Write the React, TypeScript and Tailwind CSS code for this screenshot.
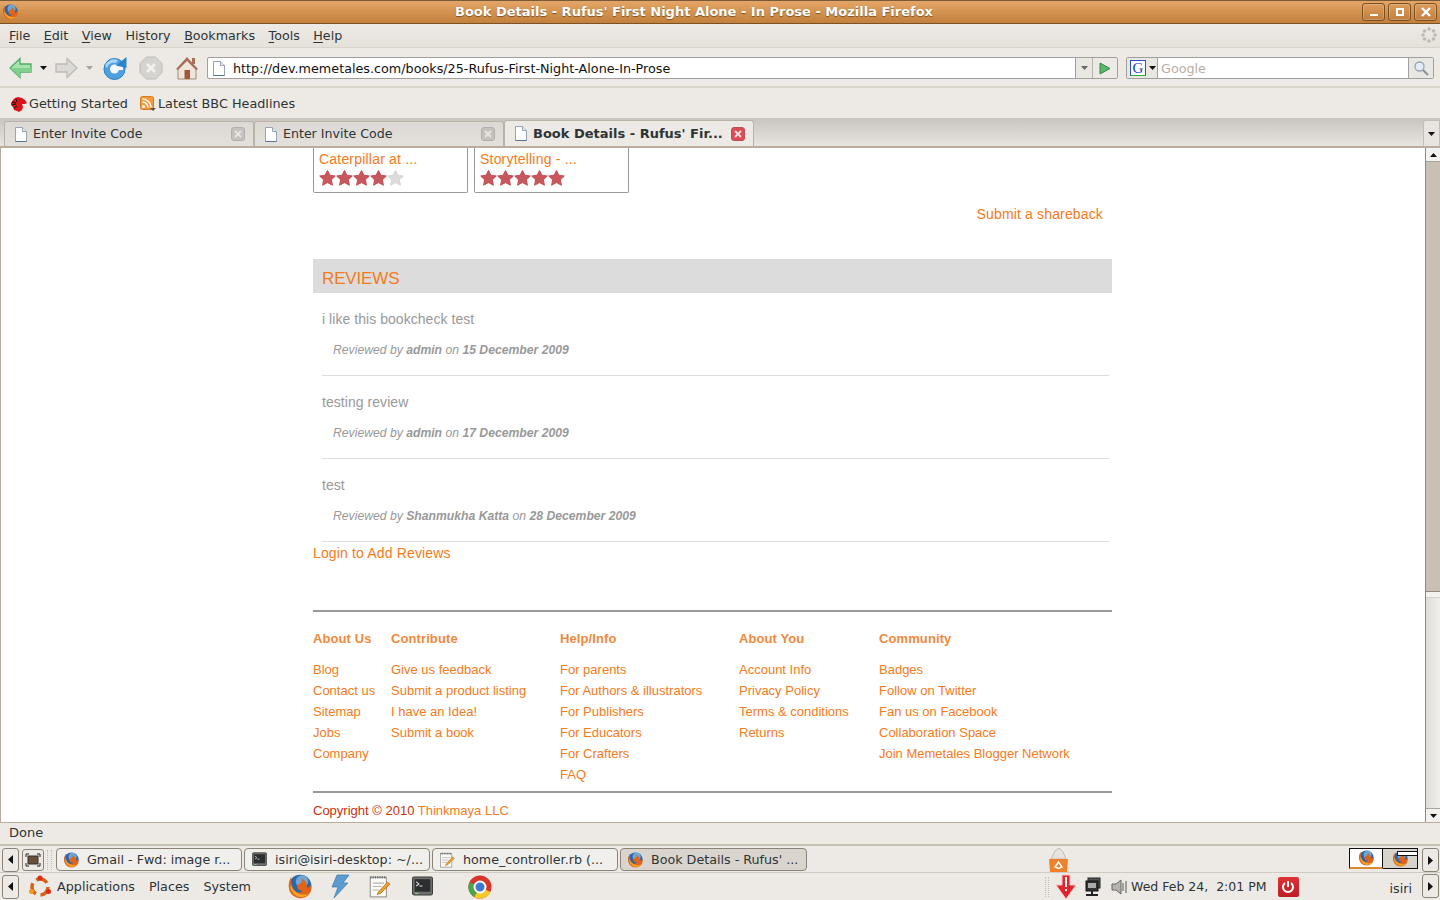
import React from "react";

const sys = "font-['DejaVu_Sans',sans-serif]";
const web = "font-['Liberation_Sans',Arial,sans-serif]";

const Firefox = ({ size = 18 }: { size?: number }) => (
  <svg width={size} height={size} viewBox="0 0 20 20" className="shrink-0">
    <circle cx="10.500" cy="9.500" r="9" fill="#2a66a8" />
    <circle cx="12" cy="6" r="5" fill="#6fa6d6" />
    <path d="M3.500 2C.5 7 .8 13 4 16.500c3.500 3.500 9.500 3.800 13 .5 2.300-2.300 3-5.500 2.300-8.500-.6 1.500-1.800 2.300-3.300 2.300.4-3-1.300-6-4.500-7 1 1.700.4 3.200-1 3.700-1.700.6-2.600 1.900-2.100 3.700.5 1.700 2.300 2.400 4.100 1.900-1.200 2-4 2.300-6 .8C3.700 11 3 6.500 3.500 2z" fill="#e2641a" />
    <path d="M2.500 10c.5 4 4 8.500 9 8.500 2.500 0 4.500-1 6-3-3 1.500-7 1.300-10-1C5.500 13 4 11.500 3.500 9z" fill="#f4a326" />
  </svg>
);

const PageIcon = () => (
  <svg width="12" height="15" viewBox="0 0 12 15" className="shrink-0">
    <path d="M.5.500h7l4 4v10h-11z" fill="#fff" stroke="#98a4b4" />
    <path d="M7.500.5v4h4" fill="#e3e7ee" stroke="#98a4b4" />
    <path d="M.5 14.500h11" stroke="#55749c" />
  </svg>
);

const Star = ({ on = true }: { on?: boolean }) => (
  <svg width="17" height="16" viewBox="0 0 17 16">
    <path
      d="M8.500.5l2.400 4.700 5.400.8-3.900 3.800 1 5.400-4.900-2.600-4.900 2.600 1-5.400L.7 6l5.400-.8z"
      fill={on ? "#c9565d" : "#dcdcdc"}
      stroke={on ? "#c04f55" : "#d6d6d6"}
    />
  </svg>
);

const Caret = ({ color = "#2e3436" }: { color?: string }) => (
  <svg width="7" height="4" viewBox="0 0 7 4" className="shrink-0">
    <path d="M0 0h7L3.500 4z" fill={color} />
  </svg>
);

const WinButton = ({ children }: { children: React.ReactNode }) => (
  <div className="w-[23px] h-[18px] rounded-[3px] border border-[#7b4f1f] bg-gradient-to-b from-[#dd9d5c] to-[#c17f3d] flex items-center justify-center shadow-[inset_0_0_0_1px_rgba(255,255,255,0.2)]">
    {children}
  </div>
);

const MenuItem = ({ first, rest, pre = "" }: { first: string; rest: string; pre?: string }) => (
  <span>
    {pre}
    <span className="underline underline-offset-2">{first}</span>
    {rest}
  </span>
);

const Tab = ({ title, active }: { title: string; active?: boolean }) => (
  <div
    className={
      "w-[250px] flex items-center pl-[10px] pr-[8px] rounded-t-[3px] border border-b-0 border-[#b9b2a6] " +
      (active
        ? "h-[26px] bg-[#edeae5] font-bold"
        : "h-[25px] bg-gradient-to-b from-[#dcd9d4] to-[#e4e1dc]")
    }
  >
    <PageIcon />
    <span className={"ml-[6px] flex-1 whitespace-nowrap text-[#2e3436] " + (active ? "text-[13px]" : "text-[12.600px]")}>
      {title}
    </span>
    {active ? (
      <div className="w-[14px] h-[14px] rounded-[3px] bg-[#df4b55] border border-[#bb5158] flex items-center justify-center">
        <svg width="8" height="8" viewBox="0 0 8 8">
          <path d="M1 1l6 6M7 1L1 7" stroke="#fbe3e3" strokeWidth="1.800" />
        </svg>
      </div>
    ) : (
      <div className="w-[14px] h-[14px] rounded-[3px] bg-[#c5c2bd] border border-[#b3b0ab] flex items-center justify-center">
        <svg width="8" height="8" viewBox="0 0 8 8">
          <path d="M1 1l6 6M7 1L1 7" stroke="#e8e6e2" strokeWidth="1.800" />
        </svg>
      </div>
    )}
  </div>
);

const Review = ({ text, by, date }: { text: string; by: string; date: string }) => (
  <div className="ml-[9px] mr-[3px] h-[83px] border-b border-[#dcdcdc] flex flex-col">
    <p className="mt-[17px] text-[14px] leading-[18px] text-[#999] tracking-[0.05px]">{text}</p>
    <p className="ml-[11px] mt-[15px] text-[12.200px] leading-[14px] italic text-[#999]">
      Reviewed by <b>{by}</b> on <b>{date}</b>
    </p>
  </div>
);

const FooterCol = ({ title, links, w }: { title: string; links: string[]; w: string }) => (
  <div className={w}>
    <h4 className="text-[13px] leading-[16px] font-bold text-[#ee8a3c] tracking-[0.1px]">{title}</h4>
    <ul className="mt-[12px]">
      {links.map(l => (
        <li key={l} className="h-[21px] text-[13px] leading-[21px] text-[#f47b20] whitespace-nowrap">
          {l}
        </li>
      ))}
    </ul>
  </div>
);

const LeftArrowBtn = () => (
  <div className="w-[17px] h-[24px] shrink-0 rounded-[3px] border border-[#8a8478] bg-[#edeae5] flex items-center justify-center">
    <svg width="5" height="9" viewBox="0 0 5 9">
      <path d="M5 0v9L0 4.500z" fill="#111" />
    </svg>
  </div>
);

const RightArrowBtn = () => (
  <div className="w-[17px] h-[24px] rounded-[3px] border border-[#8a8478] bg-[#edeae5] flex items-center justify-center">
    <svg width="5" height="9" viewBox="0 0 5 9">
      <path d="M0 0v9l5-4.500z" fill="#111" />
    </svg>
  </div>
);

const TaskButton = ({ icon, label, w, active }: { icon: React.ReactNode; label: string; w: string; active?: boolean }) => (
  <div
    className={
      w +
      " h-[23px] rounded-[4px] border border-[#8a8478] flex items-center pl-[4px] shrink-0 " +
      (active ? "bg-[#d9d5ce]" : "bg-[#f1efeb]")
    }
  >
    <span className="w-[20px] flex justify-center">{icon}</span>
    <span className="ml-[6px] text-[12.700px] text-[#2e3436] whitespace-nowrap">{label}</span>
  </div>
);

const Terminal = ({ size = 18 }: { size?: number }) => (
  <svg width={size} height={size} viewBox="0 0 20 20" className="shrink-0">
    <rect x=".5" y="1" width="19" height="17" rx="1.500" fill="#6f716c" stroke="#3b3d3a" />
    <rect x="2.500" y="3" width="15" height="12" fill="#2c2f30" />
    <path d="M4 5.500l2.500 2-2.500 2M7 9.500h3" stroke="#ddd" fill="none" />
    <rect x="3" y="16" width="3" height="1" fill="#8be08b" />
  </svg>
);

const Notepad = ({ size = 18 }: { size?: number }) => (
  <svg width={size} height={size} viewBox="0 0 20 20" className="shrink-0">
    <rect x="2" y="2" width="14" height="17" fill="#fbfbf8" stroke="#9b9b94" />
    <path d="M2 2h14" stroke="#666" strokeWidth="2" strokeDasharray="1 1" />
    <path d="M4 7h10M4 10h8M4 13h6" stroke="#b5b5ae" />
    <path d="M9 15l8-9 2 2-8 8-3 1z" fill="#eda12c" stroke="#a5650f" strokeWidth=".6" />
  </svg>
);

export default function App() {
  return (
    <div className={"w-[1440px] h-[900px] overflow-hidden flex flex-col bg-[#edeae5] " + sys}>
      {/* title bar */}
      <div className="h-[24px] shrink-0 relative flex items-center justify-center pr-[52px] border-t border-[#7a5a36] border-b border-b-[#7b5325] bg-[linear-gradient(#e4a668,#d3924f_50%,#c47f3c)]">
        <span className="absolute left-[2px] top-[3px]">
          <Firefox size={16} />
        </span>
        <span className="text-[13px] font-bold text-[#fff] [text-shadow:0_1px_1px_#7b5325]">
          Book Details - Rufus' First Night Alone - In Prose - Mozilla Firefox
        </span>
        <div className="absolute right-[3px] top-[2px] flex gap-[3px]">
          <WinButton>
            <span className="w-[8px] h-[2px] bg-white mt-[5px]" />
          </WinButton>
          <WinButton>
            <span className="w-[8px] h-[8px] border-2 border-white" />
          </WinButton>
          <WinButton>
            <svg width="10" height="10" viewBox="0 0 10 10">
              <path d="M1 1l8 8M9 1l-8 8" stroke="#fff" strokeWidth="2.400" />
            </svg>
          </WinButton>
        </div>
      </div>

      {/* menu bar */}
      <div className="h-[24px] shrink-0 flex items-center pl-[9px] pt-[1px] gap-[13.500px] text-[12.700px] text-[#2e3436] bg-gradient-to-b from-[#edeae5] to-[#e5e2dc] border-b border-[#d8d4cc] relative">
        <MenuItem first="F" rest="ile" />
        <MenuItem first="E" rest="dit" />
        <MenuItem first="V" rest="iew" />
        <MenuItem pre="Hi" first="s" rest="tory" />
        <MenuItem first="B" rest="ookmarks" />
        <MenuItem first="T" rest="ools" />
        <MenuItem first="H" rest="elp" />
        <svg width="16" height="16" viewBox="0 0 16 16" className="absolute right-[3px] top-[3px]">
          <g fill="#bdbab4">
            <circle cx="8" cy="2" r="1.800" />
            <circle cx="12.500" cy="4" r="1.800" />
            <circle cx="14" cy="8" r="1.800" />
            <circle cx="12.500" cy="12" r="1.800" />
            <circle cx="8" cy="14" r="1.800" />
            <circle cx="3.500" cy="12" r="1.800" />
            <circle cx="2" cy="8" r="1.800" />
            <circle cx="3.500" cy="4" r="1.800" />
          </g>
        </svg>
      </div>

      {/* navigation toolbar */}
      <div className="h-[40px] shrink-0 flex items-center pl-[9px] pt-[2px] border-b-2 border-[#d8d4cc]">
        <svg width="23" height="22" viewBox="0 0 23 22">
          <path d="M11 1.500L1 11l10 9.500V15h11V7H11z" fill="#a6e3ae" stroke="#4eac62" strokeWidth="1.300" />
          <path d="M11 15h11V11H1l10 9.500z" fill="#7fd08e" />
        </svg>
        <span className="ml-[8px] flex">
          <Caret color="#111" />
        </span>
        <svg width="23" height="22" viewBox="0 0 23 22" className="ml-[8px]">
          <path d="M12 1.500L22 11l-10 9.500V15H1V7h11z" fill="#dcdad6" stroke="#bdbab5" strokeWidth="1.300" />
        </svg>
        <span className="ml-[8px] flex">
          <Caret color="#a5a29c" />
        </span>
        <svg width="24" height="24" viewBox="0 0 24 24" className="ml-[10px]">
          <circle cx="11.500" cy="13" r="10.500" fill="#4f9fe2" stroke="#2b7fc4" />
          <path d="M2 10a10 10 0 0 1 13-6l-2 3a7 7 0 0 0-9 5z" fill="#a9d7f7" />
          <circle cx="11.500" cy="13" r="4.500" fill="#f4f8fb" />
          <path d="M11 9.500h9V14h-9z" fill="#f4f8fb" />
          <path d="M13 9.500L23.500 1v11z" fill="#2b83cc" />
        </svg>
        <svg width="24" height="24" viewBox="0 0 24 24" className="ml-[12px]">
          <path d="M7.500 1h9L23 7.500v9L16.500 23h-9L1 16.500v-9z" fill="#d5d3cf" stroke="#bebcb7" />
          <path d="M8 8l8 8M16 8l-8 8" stroke="#f2f1ee" strokeWidth="3" />
        </svg>
        <svg width="24" height="24" viewBox="0 0 24 24" className="ml-[12px]">
          <path d="M3 13L12 3l9 10v10H3z" fill="#eee6da" stroke="#a38a70" />
          <path d="M1 13L12 1l11 12-2 1-9-9-9 9z" fill="#a8705a" />
          <rect x="17" y="2" width="3" height="6" fill="#a8705a" />
          <rect x="9.500" y="14" width="5.500" height="9" fill="#a4553f" />
        </svg>
        {/* url bar */}
        <div className="ml-[8px] w-[911px] h-[22px] flex bg-white border border-[#a0a0a0] rounded-[2px]">
          <div className="flex-1 flex items-center pl-[5px]">
            <PageIcon />
            <span className="ml-[8px] pt-[1px] text-[12.750px] text-[#111]">
              http://dev.memetales.com/books/25-Rufus-First-Night-Alone-In-Prose
            </span>
          </div>
          <div className="w-[17px] bg-[#e9e7e2] border-l border-[#a0a0a0] flex items-center justify-center">
            <Caret color="#666" />
          </div>
          <div className="w-[25px] bg-[#edeae5] border-l border-[#b5b3ae] flex items-center justify-center rounded-r-[2px]">
            <svg width="12" height="13" viewBox="0 0 12 13">
              <path d="M1 1l10 5.500L1 12z" fill="#5cb56a" stroke="#2c8a45" />
            </svg>
          </div>
        </div>
        {/* search bar */}
        <div className="ml-[8px] w-[308px] h-[22px] flex bg-white border border-[#a0a0a0] rounded-[2px]">
          <div className="w-[31px] bg-[#e9e7e2] border-r border-[#a0a0a0] flex items-center pl-[3px] gap-[3px]">
            <span className="w-[16px] h-[16px] bg-white border border-[#2d53c8] border-r-[#c23] border-b-[#3a3] flex items-center justify-center text-[15px] leading-none text-[#1c3fc0] font-['Liberation_Serif',serif]">
              G
            </span>
            <Caret color="#111" />
          </div>
          <span className="flex-1 pl-[3px] text-[12.750px] leading-[22px] text-[#b8ada3]">Google</span>
          <div className="w-[25px] bg-[#e9e7e2] border-l border-[#a0a0a0] flex items-center justify-center">
            <svg width="16" height="16" viewBox="0 0 16 16">
              <circle cx="6.500" cy="6.500" r="4.500" fill="#e4edf6" stroke="#9aa3ac" strokeWidth="1.300" />
              <path d="M10 10l5 5" stroke="#8f9499" strokeWidth="2.200" />
            </svg>
          </div>
        </div>
      </div>

      {/* bookmarks */}
      <div className="h-[30px] shrink-0 flex items-center pl-[11px] pt-[2px] text-[12.800px] text-[#2e3436]">
        <svg width="16" height="15" viewBox="0 0 16 15" className="shrink-0">
          <path d="M0 6l2-3 2-2 3-1 4 1 3 2 2 3-2 1-3 0 1 3-1 3-3 2-2-1-3-1-1-3-2-2z" fill="#d8141c" />
          <path d="M1 5l4 1M1 8l4-1M3 11l3-2M5 2l1 3" stroke="#111" />
        </svg>
        <span className="ml-[2px]">Getting Started</span>
        <svg width="16" height="16" viewBox="0 0 16 16" className="ml-[12px] shrink-0">
          <rect x=".5" y=".5" width="13" height="13" rx="2" fill="#f59a3a" stroke="#d67a20" />
          <circle cx="3.500" cy="10.500" r="1.500" fill="#fff" />
          <path d="M2.500 6a5.500 5.500 0 0 1 5.500 5.500M2.500 3a8.500 8.500 0 0 1 8.500 8.500" stroke="#fff" strokeWidth="1.500" fill="none" />
          <path d="M10 12h6l-3 3z" fill="#555" />
        </svg>
        <span className="ml-[2px]">Latest BBC Headlines</span>
      </div>

      {/* tab strip */}
      <div className="h-[30px] shrink-0 flex items-end pl-[4px] bg-gradient-to-b from-[#c8c5c0] to-[#e8e5e0] border-b-2 border-[#b8ad9e] relative">
        <Tab title="Enter Invite Code" />
        <Tab title="Enter Invite Code" />
        <Tab title="Book Details - Rufus' Fir..." active />
        <div className="absolute right-0 bottom-0 w-[17px] h-[26px] bg-[#e8e5e0] border border-b-0 border-[#c2bfb9] rounded-tl-[3px] flex items-center justify-center">
          <Caret color="#111" />
        </div>
      </div>

      {/* page */}
      <div className="h-[674px] shrink-0 flex bg-white border-l border-[#b8ad9e] overflow-hidden">
        <div className={"flex-1 pl-[312px] " + web}>
          <div className="w-[799px]">
            <div className="flex gap-[6px]">
              {[
                { t: "Caterpillar at ...", n: 4 },
                { t: "Storytelling - ...", n: 5 },
              ].map(c => (
                <div key={c.t} className="w-[155px] h-[45px] border border-t-0 border-[#999] rounded-b-[2px] pl-[5px]">
                  <p className="text-[14px] leading-[22px] text-[#f47b20] tracking-[0.2px]">{c.t}</p>
                  <div className="flex">
                    {[1, 2, 3, 4, 5].map(i => (
                      <Star key={i} on={i <= c.n} />
                    ))}
                  </div>
                </div>
              ))}
            </div>
            <p className="mt-[12px] pr-[9px] text-right text-[14px] leading-[18px] text-[#f47b20] tracking-[0.15px]">
              Submit a shareback
            </p>
            <div className="mt-[36px] h-[34px] bg-[#dcdcdc] pl-[9px] text-[17px] tracking-[-0.15px] leading-[40px] text-[#f47b20]">REVIEWS</div>
            <Review text="i like this bookcheck test" by="admin" date="15 December 2009" />
            <Review text="testing review" by="admin" date="17 December 2009" />
            <Review text="test" by="Shanmukha Katta" date="28 December 2009" />
            <p className="mt-[2px] text-[14px] leading-[18px] text-[#f47b20] tracking-[0.15px]">Login to Add Reviews</p>
            <div className="mt-[48px] border-t-2 border-[#999]" />
            <div className="flex mt-[19px] h-[160px]">
              <FooterCol
                w="w-[78px]"
                title="About Us"
                links={["Blog", "Contact us", "Sitemap", "Jobs", "Company"]}
              />
              <FooterCol
                w="w-[169px]"
                title="Contribute"
                links={["Give us feedback", "Submit a product listing", "I have an Idea!", "Submit a book"]}
              />
              <FooterCol
                w="w-[179px]"
                title="Help/Info"
                links={["For parents", "For Authors & illustrators", "For Publishers", "For Educators", "For Crafters", "FAQ"]}
              />
              <FooterCol
                w="w-[140px]"
                title="About You"
                links={["Account Info", "Privacy Policy", "Terms & conditions", "Returns"]}
              />
              <FooterCol
                w="w-[233px]"
                title="Community"
                links={["Badges", "Follow on Twitter", "Fan us on Facebook", "Collaboration Space", "Join Memetales Blogger Network"]}
              />
            </div>
            <div className="border-t-2 border-[#999]" />
            <p className="mt-[9px] text-[13px] leading-[18px] text-[#c8320a]">
              Copyright © 2010 <span className="text-[#f47b20]">Thinkmaya LLC</span>
            </p>
          </div>
        </div>
        {/* scrollbar */}
        <div className="w-[15px] shrink-0 flex flex-col border-l border-[#8f8a80] bg-gradient-to-r from-[#e0dcd6] to-[#f2f0ec]">
          <div className="h-[14px] bg-[#f4f2ee] border-b border-[#a8a59f] flex items-center justify-center">
            <svg width="7" height="4" viewBox="0 0 7 4">
              <path d="M0 4h7L3.500 0z" fill="#111" />
            </svg>
          </div>
          <div className="h-[430px] bg-[#c9c0b4] border-b border-[#8f8a80]" />
          <div className="h-[6px] bg-[#f4f2ee] border-b border-[#d5d2cc]" />
          <div className="flex-1" />
          <div className="h-[14px] bg-[#f4f2ee] border-t border-[#a8a59f] flex items-center justify-center">
            <Caret color="#111" />
          </div>
        </div>
      </div>

      {/* status bar */}
      <div className="h-[24px] shrink-0 flex items-center pl-[9px] pb-[2px] text-[13px] text-[#2e3436] border-t border-[#b8ad9e] border-b-2 border-b-[#c5bfb4]">
        Done
      </div>

      {/* window list panel */}
      <div className="h-[27px] shrink-0 flex items-center pl-[2px] pt-[1px] relative border-b border-[#d0ccc4]">
        <LeftArrowBtn />
        <div className="ml-[3px] w-[22px] h-[22px] shrink-0 rounded-[3px] border border-[#8a8478] flex items-center justify-center">
          <svg width="16" height="14" viewBox="0 0 16 14">
            <rect x="3" y="3" width="10" height="8" fill="#6b4f3a" stroke="#333" />
            <path d="M1 4V1h3M12 1h3v3M1 10v3h3M15 10v3h-3" stroke="#222" fill="none" />
          </svg>
        </div>
        <span className="ml-[3px] mr-[4px] w-[5px] h-[20px] shrink-0 border-x border-dotted border-[#c2bfb9]" />
        <div className="flex gap-[2px]">
          <TaskButton w="w-[186px]" icon={<Firefox size={16} />} label="Gmail - Fwd: image r..." />
          <TaskButton w="w-[186px]" icon={<Terminal size={15} />} label="isiri@isiri-desktop: ~/..." />
          <TaskButton w="w-[186px]" icon={<Notepad size={16} />} label="home_controller.rb (..." />
          <TaskButton w="w-[187px]" icon={<Firefox size={16} />} label="Book Details - Rufus' ..." active />
        </div>
        <svg width="21" height="24" viewBox="0 0 21 24" className="absolute left-[1048px] top-[2px]">
          <path d="M3 11L7 3l4-3 4 4 3 7z" fill="#e6e3dd" stroke="#bbb" />
          <path d="M1 11h19l-1 13H2z" fill="#f0812b" />
          <path d="M7 19l3.500-5 3.500 5-3.500 1.500z" fill="none" stroke="#fff" strokeWidth="1.500" />
        </svg>
        <div className="absolute right-[22px] top-[2px] flex h-[21px]">
          <div className="w-[34px] bg-white border border-[#111] border-b-2 border-b-[#d88a2c] flex items-center justify-center">
            <Firefox size={16} />
          </div>
          <div className="w-[35px] bg-[#d6d3cd] border border-[#111] border-l-0 flex items-center justify-center relative">
            <Firefox size={16} />
            <span className="absolute right-0 top-[2px] w-[20px] h-[5px] bg-white border border-[#111] border-r-0" />
          </div>
        </div>
        <div className="absolute right-[1px] top-[2px]">
          <RightArrowBtn />
        </div>
      </div>

      {/* top panel */}
      <div className="flex-1 flex items-center pl-[2px] relative text-[12.750px] text-[#2e3436]">
        <LeftArrowBtn />
        <svg width="24" height="24" viewBox="0 0 24 24" className="ml-[9px] shrink-0">
          <circle cx="12" cy="12" r="8" fill="none" stroke="#d6621c" strokeWidth="3.500" strokeDasharray="12 4.800" />
          <circle cx="12" cy="3" r="2.500" fill="#d72e1e" />
          <circle cx="3.500" cy="16.500" r="2.500" fill="#ee9a1e" />
          <circle cx="20.500" cy="16.500" r="2.500" fill="#d72e1e" />
        </svg>
        <span className="ml-[5px] pt-[1px]">Applications</span>
        <span className="ml-[14px] pt-[1px]">Places</span>
        <span className="ml-[14px] pt-[1px]">System</span>
        <span className="ml-[36px] flex">
          <Firefox size={25} />
        </span>
        <svg width="19" height="25" viewBox="0 0 19 25" className="ml-[19px] shrink-0">
          <path d="M6 1h12l-6 8h5L3 24l4-11H1z" fill="#5b9bcf" stroke="#3b7cb0" strokeWidth=".7" />
        </svg>
        <span className="ml-[18px] flex">
          <Notepad size={23} />
        </span>
        <span className="ml-[21px] flex">
          <Terminal size={21} />
        </span>
        <svg width="24" height="24" viewBox="0 0 24 24" className="ml-[35px] shrink-0">
          <circle cx="12" cy="12" r="11.500" fill="#d9352b" />
          <path d="M12 12L22.500 17A11.500 11.500 0 0 1 6 22z" fill="#f3c92b" />
          <path d="M12 12L6 22A11.500 11.500 0 0 1 1.500 7z" fill="#4aa548" />
          <circle cx="12" cy="12" r="5.500" fill="#3e79d0" stroke="#fff" strokeWidth="2" />
        </svg>
        <div className="absolute left-[1045px] top-0 h-full flex items-center">
          <span className="w-[4px] h-[20px] shrink-0 border-x border-dotted border-[#c2bfb9]" />
          <svg width="22" height="26" viewBox="0 0 22 26" className="ml-[6px] shrink-0">
            <path d="M7 1h8v10h6L11 25 1 11h6z" fill="#e2252d" stroke="#f7c4c4" />
            <path d="M10 3h2v10h-2zM10 15h2v2h-2z" fill="#fff" />
          </svg>
          <svg width="16" height="20" viewBox="0 0 16 20" className="ml-[8px] shrink-0">
            <rect x="3" y="1" width="12" height="10" fill="#555" stroke="#222" />
            <rect x="1" y="4" width="12" height="10" fill="#333" stroke="#111" />
            <rect x="3" y="6" width="8" height="5" fill="#aaa" />
            <path d="M1 18h12M7 14v4" stroke="#222" strokeWidth="2" />
          </svg>
          <svg width="18" height="16" viewBox="0 0 18 16" className="ml-[10px] shrink-0">
            <path d="M1 5h4l5-4v14l-5-4H1z" fill="#b5b3ae" stroke="#666" />
            <path d="M12 4v8M15 2v12" stroke="#555" />
          </svg>
          <span className="ml-[2px] pt-[1px] whitespace-pre text-[12.500px]">Wed Feb 24,  2:01 PM</span>
          <div className="ml-[11px] w-[21px] h-[20px] rounded-[2px] bg-gradient-to-b from-[#e03037] to-[#bd1c24] flex items-center justify-center">
            <svg width="14" height="14" viewBox="0 0 14 14">
              <path d="M4 3a5 5 0 1 0 6 0" stroke="#fff" strokeWidth="2" fill="none" />
              <path d="M7 1v6" stroke="#fff" strokeWidth="2" />
            </svg>
          </div>
        </div>
        <span className="absolute right-[28px] top-[6px]">isiri</span>
        <div className="absolute right-[1px] top-[1px]">
          <RightArrowBtn />
        </div>
      </div>
    </div>
  );
}
